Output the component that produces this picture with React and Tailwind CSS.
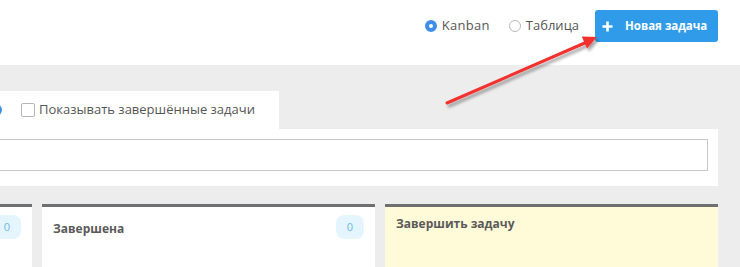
import React from "react";

function Column({ title, badge, yellow, titleClass }) {
  return (
    <div
      className={`w-[333px] shrink-0 border-t-[3px] border-[#6d6f70] ${
        yellow ? "bg-[#fffad8]" : "bg-white"
      } h-[70px] flex items-start justify-between pl-[11px] pr-[11px]`}
    >
      <div className={`text-[12px] font-bold text-[#5a5a5a] ${titleClass}`}>{title}</div>
      {badge !== undefined && (
        <div className="mt-[8px] w-[28px] h-[24px] rounded-[8px] bg-[#e4f5fe] text-[#6bbbe8] text-[11px] flex items-center justify-center">
          {badge}
        </div>
      )}
    </div>
  );
}

export default function App() {
  return (
    <div
      className="relative w-[740px] h-[267px] overflow-hidden bg-white"
      style={{ fontFamily: '"Open Sans", "Liberation Sans", sans-serif' }}
    >
      {/* Header */}
      <div className="h-[65px] bg-white flex justify-end items-start pt-[10px] pr-[22px]">
        <div className="flex items-center h-[32px] gap-[5px] mr-[19px]">
          <span className="w-[12px] h-[12px] rounded-full border-[4px] border-[#3f8fe9] bg-white" />
          <span className="text-[13px] text-[#555] tracking-[0.3px]">Kanban</span>
        </div>
        <div className="flex items-center h-[32px] gap-[5px] mr-[16px]">
          <span className="w-[12px] h-[12px] rounded-full border border-[#b9b9b9] bg-white" />
          <span className="text-[13px] text-[#555]">Таблица</span>
        </div>
        <button className="h-[32px] w-[123px] rounded-[3px] bg-[#2f9be9] text-white flex items-center pl-[7px]">
          <svg width="11" height="11" viewBox="0 0 11 11" className="mr-[12px]">
            <path d="M5.5 0.5V10.5M0.5 5.5H10.5" stroke="#fff" strokeWidth="2.6" />
          </svg>
          <span className="text-[11.5px] font-bold">Новая задача</span>
        </button>
      </div>

      {/* Gray area */}
      <div className="bg-[#ededed] h-[202px] pt-[26px]">
        <div className="w-[279px] h-[38px] bg-white flex items-center">
          <span className="w-[12px] h-[12px] rounded-full border-[2px] border-[#3f8fe9] -ml-[10px] mr-[19px]" />
          <span className="w-[14px] h-[14px] rounded-[2px] border border-[#b5b5b5] bg-white mr-[4px]" />
          <span className="text-[13px] text-[#555]">Показывать завершённые задачи</span>
        </div>
        <div className="w-[718px] h-[57px] bg-white pt-[10px] pr-[10px] pb-[15px]">
          <div className="h-[32px] border border-[#c6c6c6] -ml-[2px] border-l-0" />
        </div>
        <div className="flex gap-[10px] ml-[-301px] mt-[18px]">
          <Column title="" badge="0" />
          <Column title="Завершена" badge="0" titleClass="mt-[13px]" />
          <Column title="Завершить задачу" yellow titleClass="mt-[8px]" />
        </div>
      </div>

      {/* Annotation arrow */}
      <svg className="absolute left-0 top-0 pointer-events-none" width="740" height="267">
        <defs>
          <filter id="sh" x="-20%" y="-20%" width="140%" height="140%">
            <feDropShadow dx="2" dy="3" stdDeviation="1.5" floodColor="#000" floodOpacity="0.35" />
          </filter>
        </defs>
        <g filter="url(#sh)">
          <line x1="447" y1="103" x2="587" y2="42" stroke="#f2302d" strokeWidth="3" strokeLinecap="round" />
          <polygon points="597,37 581.8,36.6 587,48.5" fill="#f2302d" />
        </g>
      </svg>
    </div>
  );
}
